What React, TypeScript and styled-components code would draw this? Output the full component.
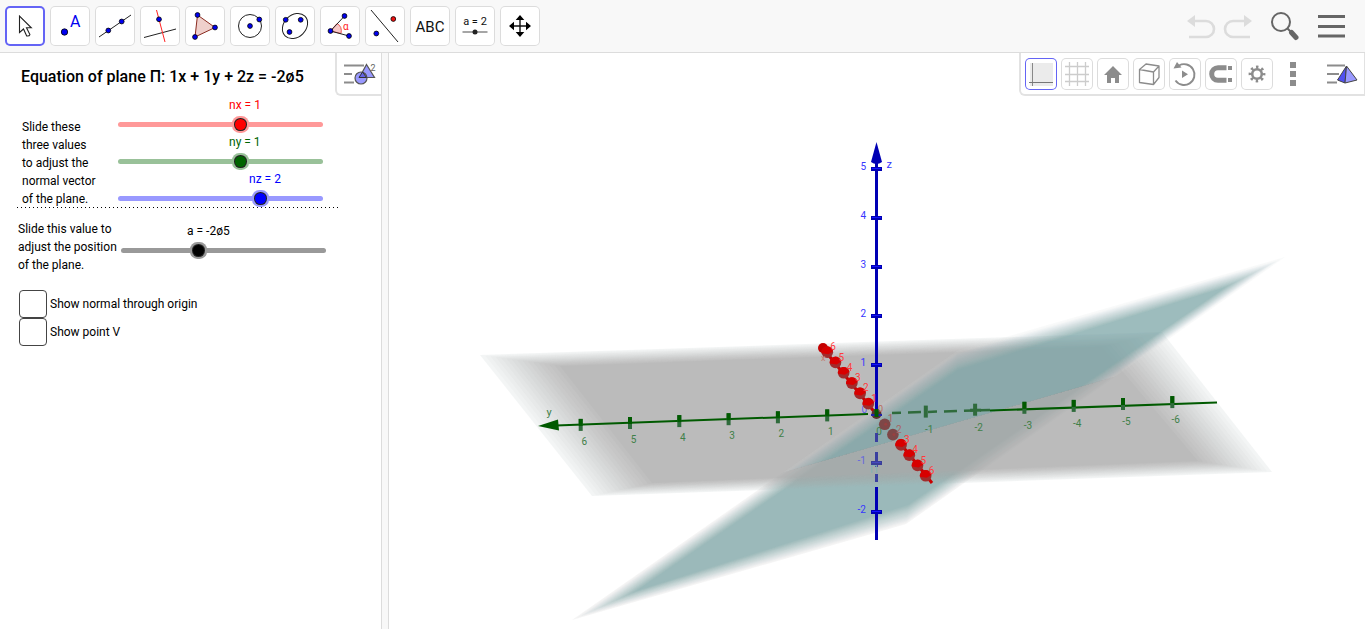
import React, { useState } from "react";
import styled, { createGlobalStyle } from "styled-components";

const GlobalStyle = createGlobalStyle`
  * { box-sizing: border-box; }
  html, body, #root { height: 100%; }
  body {
    margin: 0;
    background: #fff;
    color: #000;
    font-family: Roboto, "Open Sans", sans-serif;
    font-size: 12px;
    line-height: 18px;
  }
  button { font-family: inherit; }
`;

const Page = styled.div`
  display: flex;
  flex-direction: column;
  min-height: 100%;
  padding: 0 1px 2px 0;
`;

const Toolbar = styled.header`
  display: flex;
  align-items: center;
  justify-content: space-between;
  height: 53px;
  padding: 0 15px 0 5px;
  background: #f8f8f8;
  border-bottom: 1px solid #dcdcdc;
`;

const Tools = styled.div`
  display: flex;
  gap: 5px;
`;

const ToolButton = styled.button<{ $active?: boolean }>`
  display: block;
  position: relative;
  width: 40px;
  height: 40px;
  padding: 0;
  overflow: hidden;
  background: #fff;
  border: 0;
  border-radius: 5px;
  box-shadow: inset 0 0 0 ${(p) => (p.$active ? "2px #6464f5" : "1px #dcdcdc")};
  svg { display: block; }
`;

const Actions = styled.div`
  display: flex;
  align-items: center;
`;

const PlainButton = styled.button<{ $width: number; $height?: number }>`
  display: flex;
  align-items: center;
  justify-content: center;
  width: ${(p) => p.$width}px;
  height: ${(p) => p.$height ?? 40}px;
  padding: 0;
  background: none;
  border: 0;
`;

const Workspace = styled.main`
  display: flex;
  flex: 1;
`;

const ControlPanel = styled.section`
  position: relative;
  flex: none;
  width: 382px;
  border-right: 1px solid #dcdcdc;
  padding: 15px 0 0 17px;
`;

const Splitter = styled.div`
  flex: none;
  width: 7px;
  background: #f8f8f8;
  border-right: 1px solid #dcdcdc;
`;

const Title = styled.h1`
  margin: 0 0 10px;
  padding-left: 4px;
  font-size: 16px;
  line-height: 18px;
  font-weight: 500;
`;

const Group = styled.div<{ $split?: boolean }>`
  display: flex;
  width: 322px;
  padding-left: ${(p) => (p.$split ? 5 : 1)}px;
  margin-bottom: ${(p) => (p.$split ? 12 : 16)}px;
  background: ${(p) =>
    p.$split ? "repeating-linear-gradient(90deg, #000 0 1px, transparent 1px 4px) left bottom / 100% 1px no-repeat" : "none"};
`;

const Caption = styled.p<{ $split?: boolean }>`
  flex: none;
  width: ${(p) => (p.$split ? 96 : 103)}px;
  margin: ${(p) => (p.$split ? 22 : 0)}px 0 0;
  white-space: nowrap;
`;

const SliderStack = styled.div<{ $lower?: boolean }>`
  padding-top: ${(p) => (p.$lower ? 2 : 0)}px;
`;

const SliderRow = styled.div`
  width: 205px;
  height: 37px;
`;

const SliderLabel = styled.label<{ $color: string }>`
  display: block;
  width: max-content;
  height: 20px;
  color: ${(p) => p.$color};
`;

const SliderInput = styled.input<{ $color: string; $soft: string }>`
  appearance: none;
  display: block;
  width: 205px;
  height: 17px;
  margin: 0;
  background: transparent;
  &::-webkit-slider-runnable-track {
    height: 5px;
    border-radius: 3px;
    background: ${(p) => p.$soft};
  }
  &::-webkit-slider-thumb {
    appearance: none;
    width: 5px;
    height: 5px;
    border-radius: 50%;
    background: ${(p) => p.$color};
    box-shadow: 0 0 0 3px ${(p) => p.$color}, 0 0 0 4px #222, 0 0 0 6px ${(p) => p.$soft};
  }
`;

const CheckLabel = styled.label`
  display: flex;
  align-items: center;
  gap: 3px;
  height: 28px;
  padding-left: 2px;
  width: max-content;
`;

const CheckInput = styled.input`
  appearance: none;
  width: 28px;
  height: 28px;
  margin: 0;
  background: #fff;
  border: 1px solid #444;
  border-radius: 4px;
  &:checked { background: #9999ff; }
`;

const PanelStyleButton = styled.button`
  position: absolute;
  top: 0;
  right: 0;
  width: 46px;
  height: 43px;
  padding: 0;
  background: #fff;
  border: solid #e2e2e2;
  border-width: 0 0 2px 2px;
  border-radius: 0 0 0 6px;
  svg { display: block; }
`;

const GraphicsView = styled.section`
  position: relative;
  flex: 1;
  min-width: 0;
`;

const Scene = styled.svg`
  display: block;
  width: 100%;
  font-family: Roboto, "Open Sans", sans-serif;
  font-size: 10px;
`;

const StyleBar = styled.div`
  position: absolute;
  top: 0;
  right: 0;
  display: flex;
  align-items: flex-start;
  gap: 4px;
  height: 43px;
  padding: 5px 3px 0 4px;
  background: #fff;
  border: solid #e2e2e2;
  border-width: 0 1px 2px 2px;
  border-radius: 0 0 0 6px;
`;

const StyleButton = styled.button<{ $active?: boolean }>`
  width: 32px;
  height: 32px;
  padding: 0;
  background: #fff;
  border: 0;
  border-radius: 5px;
  box-shadow: inset 0 0 0 1px ${(p) => (p.$active ? "#6464f5" : "#dcdcdc")};
  svg { display: block; }
`;

const BLUE = "#0000f0";

const Dot = ({ x, y, r = 2.4, fill = BLUE }: { x: number; y: number; r?: number; fill?: string }) => (
  <circle cx={x} cy={y} r={r} fill={fill} stroke="#000" strokeWidth="0.8" />
);

const toolIcons: { name: string; art: React.ReactNode }[] = [
  {
    name: "Move",
    art: <path d="M14.5 10v16.5l4-3.5 3.2 7q2.8.3 3.2-1.4l-3.4-6.8h4.8z" fill="#fff" stroke="#222" strokeWidth="1.1" />,
  },
  {
    name: "Point",
    art: (
      <>
        <Dot x={14.5} y={26} r={3.2} />
        <text x="20" y="20.5" fontSize="16" fill={BLUE}>A</text>
      </>
    ),
  },
  {
    name: "Line",
    art: (
      <>
        <path d="M4 31L36 9" stroke="#222" />
        <Dot x={13.3} y={24.5} />
        <Dot x={26.7} y={15.5} />
      </>
    ),
  },
  {
    name: "Perpendicular line",
    art: (
      <>
        <path d="M4 31.5L36 23" stroke="#222" />
        <path d="M16.5 4L25 36" stroke="#f22" />
        <Dot x={19} y={13.3} />
      </>
    ),
  },
  {
    name: "Polygon",
    art: (
      <>
        <path d="M12.5 9L30 21.5 10 31z" fill="#efd0cc" stroke="#8a2b20" />
        <Dot x={12.5} y={9} />
        <Dot x={30} y={21.5} />
        <Dot x={10} y={31} />
      </>
    ),
  },
  {
    name: "Circle",
    art: (
      <>
        <circle cx="20" cy="20" r="11.5" fill="none" stroke="#222" />
        <Dot x={20} y={20} />
        <Dot x={29.3} y={13.5} />
      </>
    ),
  },
  {
    name: "Ellipse",
    art: (
      <>
        <ellipse cx="20" cy="20" rx="14" ry="11" transform="rotate(-45 20 20)" fill="none" stroke="#222" />
        <Dot x={10.7} y={13.8} />
        <Dot x={25.7} y={13.8} />
        <Dot x={14.5} y={26} />
      </>
    ),
  },
  {
    name: "Angle",
    art: (
      <>
        <path d="M10.5 25L17 17.5Q22.5 20.5 21 27.5z" fill="#f8c8c8" stroke="#e55" />
        <path d="M24.5 10L10.5 25 29 30" fill="none" stroke="#222" />
        <Dot x={24.5} y={10} />
        <Dot x={10.5} y={25} />
        <Dot x={29} y={30} />
        <text x="23" y="23.5" fontSize="10" fill="#f22">α</text>
      </>
    ),
  },
  {
    name: "Reflect",
    art: (
      <>
        <path d="M6 4L33 36" stroke="#222" />
        <Dot x={28.3} y={13} fill="#e11" />
        <Dot x={11.3} y={27.5} />
      </>
    ),
  },
  {
    name: "Text",
    art: <text x="20" y="25.5" fontSize="15" textAnchor="middle" fill="#111">ABC</text>,
  },
  {
    name: "Slider",
    art: (
      <>
        <text x="20" y="18.5" fontSize="11" textAnchor="middle" fill="#111">a = 2</text>
        <path d="M7.5 26h25" stroke="#888" strokeWidth="1.5" />
        <circle cx="20" cy="26" r="2.5" fill="#222" />
      </>
    ),
  },
  {
    name: "Move view",
    art: (
      <>
        <path d="M20 13v14M13 20h14" stroke="#111" strokeWidth="1.4" />
        <path d="M20 9l4.3 5h-8.6zM20 31l4.3-5h-8.6zM9 20l5-4.3v8.6zM31 20l-5-4.3v8.6z" />
      </>
    ),
  },
];

const styleIcons: { name: string; art: React.ReactNode }[] = [
  {
    name: "Show axes",
    art: (
      <>
        <path d="M5 5h23v23H5z" fill="#ebebeb" />
        <path d="M7.5 5v23" stroke="#888" />
        <path d="M4 24.5h24" stroke="#777" />
      </>
    ),
  },
  {
    name: "Show grid",
    art: <path d="M8.5 4v24M16.5 4v24M24.5 4v24M4 8.5h24M4 16.5h24M4 23.5h24" stroke="#ccc" strokeWidth="1.3" />,
  },
  { name: "Home view", art: <path d="M16 8l9 9h-3v8h-4v-5h-4v5h-4v-8H7z" fill="#8c8c8c" /> },
  {
    name: "Projection",
    art: (
      <path
        d="M6.5 11.5l14 2.5v12.5l-14-2zM6.5 11.5L13 6l13 2-5.5 6M26 8v11.5l-5.5 7"
        fill="none" stroke="#8c8c8c" strokeWidth="1.3" strokeLinejoin="round"
      />
    ),
  },
  {
    name: "Rotate view",
    art: (
      <>
        <path d="M10 7.5A10.4 10.4 0 1 1 6.5 22.5" fill="none" stroke="#8c8c8c" strokeWidth="1.9" />
        <path d="M4.5 10.5l3.5-6.5 4.5 5.5zM13 12.5l6 3.7-6 3.8z" fill="#8c8c8c" />
      </>
    ),
  },
  {
    name: "Point capturing",
    art: (
      <>
        <path d="M21.5 9.7H13a6.2 6.2 0 0 0 0 12.6h8.5" fill="none" stroke="#8c8c8c" strokeWidth="5" />
        <path d="M23 8h4v4h-4zM23 20h4v4h-4z" fill="#8c8c8c" />
      </>
    ),
  },
  {
    name: "Settings",
    art: (
      <>
        <circle cx="16" cy="16" r="4.8" fill="none" stroke="#8c8c8c" strokeWidth="2.6" />
        <circle cx="16" cy="16" r="6.9" fill="none" stroke="#8c8c8c" strokeWidth="3" strokeDasharray="2.4 3.019" strokeDashoffset="1.2" />
      </>
    ),
  },
];

type Point = [number, number];

const GRAY_OUTER: Point[] = [[480, 355], [1162, 332], [1272, 472], [592, 496]];
const GRAY_INNER: Point[] = [[560, 366], [1102, 347], [1198, 461], [652, 483]];
const TEAL_OUTER: Point[] = [[572, 620], [957, 351], [1285, 257], [906, 524]];
const TEAL_INNER: Point[] = [[636, 591], [958, 370], [1226, 287], [908, 505]];

const STEPS = 16;

/* A plane whose border fades out: nested polygons build up to the full opacity. */
const FadedPlane = ({ outer, inner, color, edge, alpha }: {
  outer: Point[]; inner: Point[]; color: string; edge: string; alpha: number;
}) => (
  <g>
    {Array.from({ length: STEPS }, (_, i) => {
      const t = i / (STEPS - 1);
      const before = i === 0 ? 0 : alpha * (0.12 + 0.88 * (i / STEPS));
      const after = alpha * (0.12 + 0.88 * ((i + 1) / STEPS));
      const points = outer
        .map(([x, y], k) => `${x + (inner[k][0] - x) * t},${y + (inner[k][1] - y) * t}`)
        .join(" ");
      return <polygon key={i} points={points} fill={i < 2 ? edge : color} fillOpacity={1 - (1 - after) / (1 - before)} />;
    })}
  </g>
);

const yTicks = [6, 5, 4, 3, 2, 1, -1, -2, -3, -4, -5, -6].map((n) => ({
  n,
  x: 876.5 - n * 49.3,
  y: 413.5 + n * 1.9,
  labelX: 879 - n * 49.3,
}));
const zTicks = [5, 4, 3, 2, 1, -1, -2].map((n) => ({ n, y: 414 - n * 49 }));
const xTicks = [6, 5, 4, 3, 2, 1, -1, -2, -3, -4, -5, -6].map((n) => ({
  n,
  x: 876.5 - n * 8.2,
  y: 414 - n * 10.3,
}));

const Plot = () => (
  <Scene viewBox="389 53 976 576" role="img" aria-label="Plane in three-dimensional space">
    <defs>
      <clipPath id="front">
        <path d="M500 554L1117 376 1400 294V100H500z" />
      </clipPath>
      <clipPath id="back">
        <path d="M500 554L1117 376 1400 294V700H500z" />
      </clipPath>
    </defs>
    <g clipPath="url(#back)">
      <FadedPlane outer={TEAL_OUTER} inner={TEAL_INNER} color="#7aa5a7" edge="#b4b4b4" alpha={0.75} />
    </g>
    <FadedPlane outer={GRAY_OUTER} inner={GRAY_INNER} color="#ababab" edge="#a8b8b8" alpha={0.78} />
    <g clipPath="url(#front)">
      <FadedPlane outer={TEAL_OUTER} inner={TEAL_INNER} color="#7aa5a7" edge="#d4dada" alpha={0.75} />
    </g>

    <g stroke="#005a00" fill="#005a00">
      <path d="M556 425.5L868 414" strokeWidth="2" />
      <path d="M892 413l98-3" strokeWidth="2.5" strokeDasharray="9 7 13 7" stroke="#2f6b3c" />
      <path d="M990 410.5L1217 402.5" strokeWidth="2.2" />
      <path d="M538 426l20-6.5 1 11z" stroke="none" />
      {yTicks.map(({ n, x, y }) => (
        <g key={n} stroke="none">
          <rect x={x - 2} y={y - 6} width="4" height="12" fill="#2f6b3c" />
          {(n > 0 || n < -2) && <rect x={x - 2} y={y - 6} width="4" height="7" />}
          {n === -2 && <rect x={x - 5} y={y - 1} width="11" height="3" fill="#2f6b3c" />}
        </g>
      ))}
    </g>
    <g fill="#3f8048" textAnchor="middle">
      {yTicks.map(({ n, labelX, y }) => (
        <text key={n} x={labelX + 1} y={Math.round(y + (n > 0 ? 20 : 21))}>{n}</text>
      ))}
      <text x="549" y="415.5" fontSize="11">y</text>
      <text x="879" y="435">0</text>
    </g>

    <g>
      <path d="M876.5 158V414" stroke="#0000b4" strokeWidth="3" />
      <path d="M876.5 433v9M876.5 452v15M876.5 474v8" stroke="#3a3fa0" strokeWidth="3" />
      <path d="M876.5 487V540" stroke="#0000b4" strokeWidth="3" />
      <path d="M876.5 142l5.5 20q-5.5 4-11 0z" fill="#0000b4" />
      {zTicks.map(({ n, y }) => (
        <g key={n}>
          <rect x="871" y={y - 2} width="11" height="4" fill={n === -1 ? "#3a3f98" : "#0000b4"} />
          <rect x="872" y={y - 1} width="9" height="1" fill={n === -1 ? "#4448c0" : "#1414ff"} />
        </g>
      ))}
    </g>
    <g fill="#3636ff" textAnchor="end">
      {zTicks.map(({ n, y }) => (
        <text key={n} x="866" y={y + 1} opacity={n === -1 ? 0.6 : 1}>{n}</text>
      ))}
      <text x="867" y="413" opacity="0.7">0</text>
      <text x="892" y="168" fontSize="11">z</text>
    </g>
    <text x="870" y="473" fontSize="11" fill="#83b3b3">Π</text>

    <path d="M822 347L876 414" stroke="#c80000" strokeWidth="3" />
    <path d="M900 443L932 483" stroke="#c80000" strokeWidth="3" />
    <circle cx="823" cy="348" r="5" fill="#c40000" />
    {xTicks.map(({ n, x, y }) => {
      const hidden = n === -1 || n === -2;
      return (
        <g key={n}>
          <circle cx={x} cy={y} r="5.8" fill={hidden ? "#7e4747" : "#a02c2c"} />
          {!hidden && <path d={`M${x - 5.8} ${y + 1}a5.8 5.8 0 0 1 11.6-2l-4.6 3z`} fill="#d80000" />}
          {hidden && <circle cx={x + 1} cy={y} r="1.5" fill="#984040" />}
        </g>
      );
    })}
    {xTicks.map(({ n, x, y }) => (
      <text key={n} x={x + 3} y={y - 2} fontSize="10" fill={n === -1 || n === -2 ? "#a86464" : "#ff3c3c"}>{Math.abs(n)}</text>
    ))}
    <text x="821" y="361" fontSize="9" fill="#c47c70">x</text>
    <circle cx="876.5" cy="414" r="5" fill="#5a3030" />
    <path d="M871 415h11" stroke="#2020a8" strokeWidth="2" />
    <path d="M876.5 409v8" stroke="#005a00" strokeWidth="4" />
    <text x="878" y="412" fontSize="9" fill="#b86a5a">0</text>
  </Scene>
);

const formatValue = (v: number) => String(v).replace(".", "ø");

const ValueSlider = ({ name, start, limit, step, color, soft }: {
  name: string; start: number; limit: number; step: number; color: string; soft: string;
}) => {
  const [value, setValue] = useState(start);
  const offset = ((value + limit) / (2 * limit)) * 200 - 9;
  return (
    <SliderRow>
      <SliderLabel htmlFor={name} $color={color} style={{ marginLeft: offset }}>
        {name} = {formatValue(value)}
      </SliderLabel>
      <SliderInput
        id={name} type="range" min={-limit} max={limit} step={step} value={value}
        $color={color} $soft={soft}
        onChange={(e) => setValue(Number(e.target.value))}
      />
    </SliderRow>
  );
};

export default function App() {
  const [tool, setTool] = useState("Move");
  return (
    <Page>
      <GlobalStyle />
      <Toolbar>
        <Tools>
          {toolIcons.map(({ name, art }) => (
            <ToolButton key={name} aria-label={name} $active={name === tool} onClick={() => setTool(name)}>
              <svg width="40" height="40" viewBox="0 0 40 40">{art}</svg>
            </ToolButton>
          ))}
        </Tools>
        <Actions>
          <PlainButton $width={37} aria-label="Undo">
            <svg width="30" height="26" viewBox="0 0 30 26">
              <path d="M7 8h13a7.5 7.5 0 0 1 0 16H3" fill="none" stroke="#dcdcdc" strokeWidth="2.6" />
              <path d="M1 8l8-6v12z" fill="#dcdcdc" />
            </svg>
          </PlainButton>
          <PlainButton $width={37} aria-label="Redo">
            <svg width="30" height="26" viewBox="0 0 30 26">
              <path d="M23 8H10a7.5 7.5 0 0 0 0 16h17" fill="none" stroke="#dcdcdc" strokeWidth="2.6" />
              <path d="M29 8l-8-6v12z" fill="#dcdcdc" />
            </svg>
          </PlainButton>
          <PlainButton $width={57} aria-label="Search">
            <svg width="30" height="30" viewBox="0 0 30 30">
              <circle cx="11" cy="11" r="9" fill="none" stroke="#666" strokeWidth="2" />
              <path d="M17.5 17.5l4 4" stroke="#666" strokeWidth="2" />
              <path d="M21.5 21.5l4.5 5" stroke="#666" strokeWidth="5" strokeLinecap="round" />
            </svg>
          </PlainButton>
          <PlainButton $width={37} aria-label="Menu">
            <svg width="28" height="24" viewBox="0 0 28 24">
              <path d="M0 2.5h27M0 12.5h27M0 22h27" stroke="#666" strokeWidth="3" />
            </svg>
          </PlainButton>
        </Actions>
      </Toolbar>

      <Workspace>
        <ControlPanel>
          <Title>Equation of plane Π: 1x + 1y + 2z = -2ø5</Title>
          <Group $split>
            <Caption $split>
              Slide these<br />three values<br />to adjust the<br />normal vector<br />of the plane.
            </Caption>
            <SliderStack>
              <ValueSlider name="nx" start={1} limit={5} step={0.1} color="#ff0000" soft="#ff9999" />
              <ValueSlider name="ny" start={1} limit={5} step={0.1} color="#006400" soft="#99c199" />
              <ValueSlider name="nz" start={2} limit={5} step={0.1} color="#0000ff" soft="#9999ff" />
            </SliderStack>
          </Group>
          <Group>
            <Caption>
              Slide this value to<br />adjust the position<br />of the plane.
            </Caption>
            <SliderStack $lower>
              <ValueSlider name="a" start={-2.5} limit={10} step={0.1} color="#000000" soft="#999999" />
            </SliderStack>
          </Group>
          <CheckLabel><CheckInput type="checkbox" />Show normal through origin</CheckLabel>
          <CheckLabel><CheckInput type="checkbox" />Show point V</CheckLabel>
          <PanelStyleButton aria-label="Graphics style bar">
            <svg width="44" height="41" viewBox="337 53 44 41">
              <path d="M344 65.5h20M344 74h8M344 82.5h10" stroke="#8c8c8c" strokeWidth="2" />
              <path d="M366.5 64.5l8 13h-15z" fill="#9999ff" stroke="#555" strokeWidth="1.2" />
              <circle cx="361" cy="78" r="6" fill="#9999ff" stroke="#555" strokeWidth="1.2" />
              <path d="M362.5 72l4 5.5h-7.5z" fill="#6464e8" stroke="#333" />
              <text x="370.5" y="71" fontSize="9" fill="#666">2</text>
            </svg>
          </PanelStyleButton>
        </ControlPanel>
        <Splitter />
        <GraphicsView>
          <Plot />
          <StyleBar>
            {styleIcons.map(({ name, art }, i) => (
              <StyleButton key={name} aria-label={name} $active={i === 0}>
                <svg width="32" height="32" viewBox="0 0 32 32">{art}</svg>
              </StyleButton>
            ))}
            <PlainButton $width={32} $height={32} aria-label="More">
              <svg width="6" height="24" viewBox="0 0 6 24">
                <path d="M0 0h6v6H0zM0 9h6v6H0zM0 18h6v6H0z" fill="#8c8c8c" />
              </svg>
            </PlainButton>
            <PlainButton $width={48} $height={32} aria-label="3D graphics style bar">
              <svg width="42" height="24" viewBox="1316 62 42 24">
                <path d="M1327 65.5h18M1327 74h12M1327 82.5h10" stroke="#8c8c8c" strokeWidth="2" />
                <path d="M1346.5 66l-9 14 7.5 3z" fill="#5050f0" stroke="#444" />
                <path d="M1346.5 66l-1.5 17 12-3z" fill="#9999ff" stroke="#444" />
              </svg>
            </PlainButton>
          </StyleBar>
        </GraphicsView>
      </Workspace>
    </Page>
  );
}
